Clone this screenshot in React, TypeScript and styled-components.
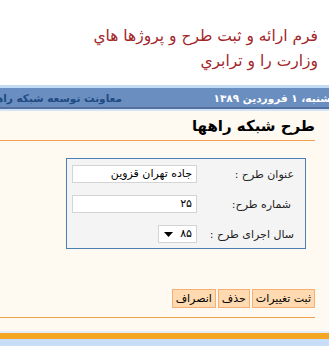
import React from "react";
import styled, { createGlobalStyle } from "styled-components";

const GlobalStyle = createGlobalStyle`
  html, body { margin: 0; padding: 0; background: #ffffff; overflow: hidden; }
  body { font-family: "DejaVu Sans", Tahoma, sans-serif; }
`;

const Page = styled.div`
  width: 329px;
  height: 346px;
  overflow: hidden;
  direction: rtl;
  display: flex;
  flex-direction: column;
`;

const TitleBlock = styled.div`
  height: 85px;
  box-sizing: border-box;
  padding: 24px 11px 0 0;
  color: #a3262a;
  font-size: 15.5px;
  line-height: 25px;
`;

const HeaderWrap = styled.div`
  background: #d3e4f8;
  border-top: 3px solid #c3daf5;
  padding-bottom: 2px;
`;

const HeaderBar = styled.div`
  height: 19px;
  background: #6a8ec0;
  border-bottom: 2px solid #52719e;
  margin-right: -12px;
  display: grid;
  grid-template-columns: 219px 1fr;
  align-items: center;
  font-size: 10.5px;
  font-weight: bold;
  white-space: nowrap;
`;

const HeaderText = styled.div<{ $light?: boolean }>`
  color: ${(p) => (p.$light ? "#ffffff" : "#1f4b82")};
  overflow: visible;
`;

const Content = styled.div`
  flex: 1;
  background: #fffaf1;
  padding: 4px 14px 0 0;
  display: flex;
  flex-direction: column;
`;

const PageTitle = styled.h1`
  margin: 0;
  font-size: 15px;
  font-weight: bold;
  color: #000;
  line-height: 22px;
  padding-bottom: 3px;
  border-bottom: 1px solid #f0a04e;
  margin-left: -20px;
`;

const FormBox = styled.div`
  margin: 17px 9px 0 0;
  width: 240px;
  box-sizing: border-box;
  border: 1px solid #4d7fb2;
  background: #f4f4f4;
  padding: 6px 11px 5px 5px;
  display: grid;
  grid-template-columns: 1fr 125px;
  row-gap: 12px;
  align-items: center;
`;

const Label = styled.div<{ $indent?: number }>`
  font-size: 11px;
  color: #222;
  padding-right: ${(p) => p.$indent ?? 0}px;
  white-space: nowrap;
`;

const TextField = styled.div`
  height: 18px;
  box-sizing: border-box;
  background: #fff;
  border: 1px solid #d4d4d4;
  font-size: 11px;
  line-height: 16px;
  padding: 0 4px;
  color: #000;
  white-space: nowrap;
`;

const SelectWrap = styled.div`
  display: flex;
`;

const SelectField = styled.div`
  width: 39px;
  height: 18px;
  box-sizing: border-box;
  background: #fff;
  border: 1px solid #d4d4d4;
  font-size: 11px;
  line-height: 16px;
  padding: 0 4px 0 5px;
  display: flex;
  justify-content: space-between;
  align-items: center;
`;

const Buttons = styled.div`
  margin-top: 40px;
  display: flex;
  gap: 2px;
`;

const Button = styled.button`
  height: 19px;
  box-sizing: border-box;
  padding: 0 3px;
  border: 1px solid #f5ae74;
  background: #ffdab0;
  font-family: "DejaVu Sans", Tahoma, sans-serif;
  font-size: 11px;
  color: #000;
  line-height: 16px;
  direction: rtl;
`;

const BottomRule = styled.div`
  margin-top: 9px;
  margin-left: -20px;
  border-top: 1px solid #f0a04e;
`;

const Footer = styled.div`
  background: #c8ddf8;
  border-top: 2px solid #e6edf6;
  height: 7px;
  box-shadow: inset 0 6px 0 #f4a622;
  padding-top: 6px;
`;

export default function App() {
  return (
    <>
      <GlobalStyle />
      <Page>
        <TitleBlock>
          <div>فرم ارائه و ثبت طرح و پروژها هاي</div>
          <div>وزارت را و ترابري</div>
        </TitleBlock>
        <HeaderWrap>
          <HeaderBar>
            <HeaderText $light>یکشنبه، ۱ فروردین ۱۳۸۹</HeaderText>
            <HeaderText>معاونت توسعه شبکه راهها</HeaderText>
          </HeaderBar>
        </HeaderWrap>
        <Content>
          <PageTitle>طرح شبکه راهها</PageTitle>
          <FormBox>
            <Label>عنوان طرح :</Label>
            <TextField>جاده تهران قزوین</TextField>
            <Label $indent={3}>شماره طرح:</Label>
            <TextField>۲۵</TextField>
            <Label>سال اجرای طرح :</Label>
            <SelectWrap>
              <SelectField>
                <span>۸۵</span>
                <svg width="9" height="5" viewBox="0 0 9 5">
                  <path d="M0 0 H9 L4.5 5 Z" fill="#000" />
                </svg>
              </SelectField>
            </SelectWrap>
          </FormBox>
          <Buttons>
            <Button>ثبت تغییرات</Button>
            <Button>حذف</Button>
            <Button>انصراف</Button>
          </Buttons>
          <BottomRule />
        </Content>
        <Footer />
      </Page>
    </>
  );
}
